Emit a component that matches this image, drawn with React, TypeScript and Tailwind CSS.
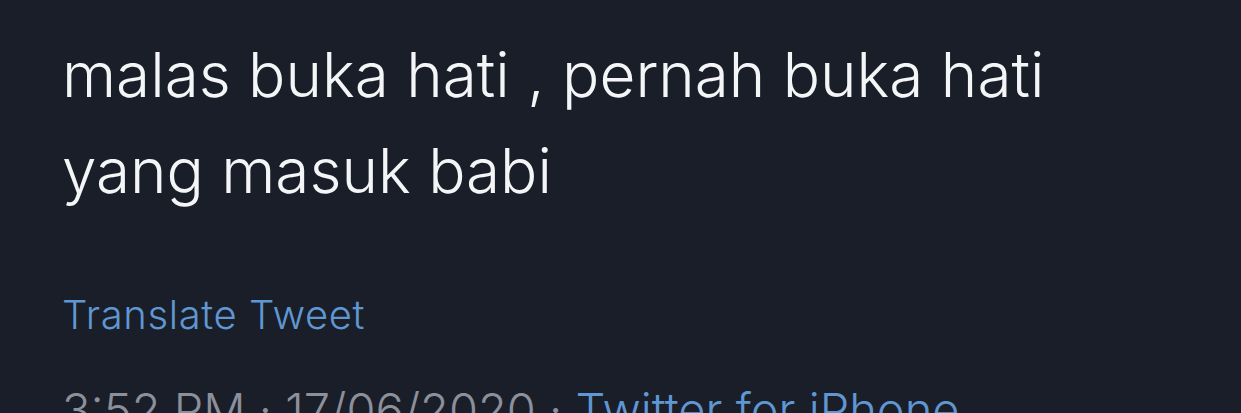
import React from 'react';

const App: React.FC = () => {
  return (
    <div
      className="w-[1241px] h-[413px] overflow-hidden bg-[#1a1e29] pl-[62px] pt-[27px] font-light"
      style={{ fontFamily: 'Inter, "Noto Sans", sans-serif' }}
    >
      {/* Tweet body */}
      <p className="text-[62px] leading-[96px] text-[#f4f5f7] max-w-[1000px]">
        malas buka hati , pernah buka hati
        <br />
        yang masuk babi
      </p>

      <a className="block mt-[72px] text-[40px] leading-[48px] tracking-[0.6px] text-[#5f97d3]">Translate Tweet</a>

      {/* Meta row */}
      <div className="mt-[47px] flex text-[47px] leading-[48px] whitespace-nowrap">
        <span className="text-[#8b909a]">3:52 PM · 17/06/2020 ·&nbsp;</span>
        <span className="text-[#5f97d3]">Twitter for iPhone</span>
      </div>
    </div>
  );
};

export default App;
